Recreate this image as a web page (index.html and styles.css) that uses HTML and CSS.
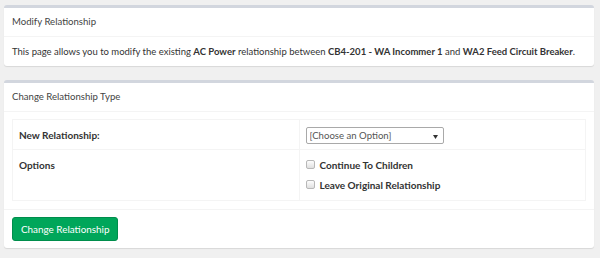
FILE: index.html
```html
<!DOCTYPE html>
<html lang="en">
<head>
    <meta charset="UTF-8">
    <title>Modify Relationship</title>
    <link rel="stylesheet" href="styles.css">
</head>
<body>
    <div class="box">
        <div class="box-header">Modify Relationship</div>
        <div class="box-body intro">
            This page allows you to modify the existing <b>AC Power</b> relationship between
            <b>CB4-201 - WA Incommer 1</b> and <b>WA2 Feed Circuit Breaker</b>.
        </div>
    </div>

    <div class="box">
        <div class="box-header">Change Relationship Type</div>
        <div class="box-body">
            <table class="form-table">
                <tr>
                    <th>New Relationship:</th>
                    <td>
                        <span class="select-wrap">
                            <select class="select">
                                <option>[Choose an Option]</option>
                            </select>
                            <svg class="select-arrow" width="5" height="4" viewBox="0 0 5 4"><path d="M0 0h5L2.5 4z" fill="#333"/></svg>
                        </span>
                    </td>
                </tr>
                <tr class="options-row">
                    <th>Options</th>
                    <td>
                        <label class="check"><input type="checkbox"> Continue To Children</label>
                        <label class="check"><input type="checkbox"> Leave Original Relationship</label>
                    </td>
                </tr>
            </table>
        </div>
        <div class="box-footer">
            <button class="btn-success">Change Relationship</button>
        </div>
    </div>
</body>
</html>
```

FILE: styles.css
```css
body {
    margin: 0;
    padding: 5px 6px 0 4px;
    background-color: #f0f0f0;
    font-family: Lato, "Noto Sans", sans-serif;
    font-size: 9.8px;
    color: #333;
}

.box {
    background-color: #fff;
    border-top: 3px solid #d2d6de;
    border-radius: 3px;
    box-shadow: 0 1px 1px rgba(0, 0, 0, 0.1);
    margin-bottom: 14px;
}

.box-header {
    padding: 0 8px;
    height: 28px;
    line-height: 28px;
    color: #444;
    font-size: 9.6px;
    border-bottom: 1px solid #f4f4f4;
}

.box-body {
    padding: 0 8px;
    line-height: 29px;
}

.intro {
    font-size: 9.5px;
    white-space: nowrap;
}

.box-body b {
    font-weight: bold;
}

.form-table {
    width: 100%;
    margin: 7px 0 8px;
    border-collapse: collapse;
    border: 1px solid #f4f4f4;
    line-height: 18px;
    table-layout: fixed;
    font-size: 10px;
}

.form-table th,
.form-table td {
    border: 1px solid #f4f4f4;
    padding: 6px 6px 5px;
    vertical-align: top;
    text-align: left;
}

.form-table th {
    font-weight: bold;
}

.select-wrap {
    position: relative;
    display: block;
    width: 138px;
}

.select {
    appearance: none;
    -webkit-appearance: none;
    width: 138px;
    height: 17px;
    margin-top: 1px;
    padding: 0 0 0 3px;
    border: 1px solid #a9a9a9;
    border-radius: 2px;
    background-color: #fff;
    font-family: inherit;
    font-size: 9.6px;
    color: #555;
    display: block;
}

.select-arrow {
    position: absolute;
    right: 6px;
    top: 8px;
}

.options-row td {
    padding-top: 5px;
    padding-bottom: 5px;
}

.options-row th {
    padding-top: 6px;
}

.check {
    display: flex;
    align-items: center;
    gap: 5px;
    height: 20px;
    font-weight: bold;
}

.check input {
    appearance: none;
    -webkit-appearance: none;
    margin: 0;
    width: 9px;
    height: 9px;
    border: 1px solid #b8b8b8;
    border-radius: 2px;
    background: linear-gradient(#fdfdfd, #e0e0e0);
    position: relative;
    top: -1px;
}

.box-footer {
    border-top: 1px solid #f4f4f4;
    padding: 7px 8px;
}

.btn-success {
    display: block;
    height: 24px;
    padding: 0 8px;
    background-color: #00a65a;
    border: 1px solid #008d4c;
    border-radius: 3px;
    color: #fff;
    font-family: inherit;
    font-size: 9.9px;
}
```
